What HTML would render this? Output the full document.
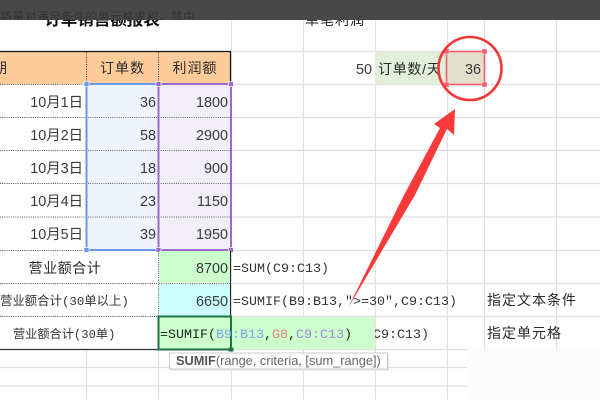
<!DOCTYPE html>
<html><head><meta charset="utf-8"><style>
html,body{margin:0;padding:0;background:#fff;width:600px;height:400px;overflow:hidden}
svg{display:block;filter:blur(.3px)}
text{font-family:"Liberation Mono","WenQuanYi Zen Hei","Noto Sans CJK SC",monospace;font-size:13.33px;fill:#333}
.n{font-family:"Liberation Sans","WenQuanYi Zen Hei","Noto Sans CJK SC",sans-serif;font-size:14.4px;fill:#3a3a3a;text-anchor:end}
.c{font-family:"Liberation Sans","Noto Sans CJK SC",sans-serif;font-size:14px;fill:#2a2a2a}
.m{text-anchor:middle}
</style></head><body>
<svg width="600" height="400" viewBox="0 0 600 400" xmlns="http://www.w3.org/2000/svg">
<defs><clipPath id="top"><rect x="0" y="0" width="600" height="20"/></clipPath></defs>
<rect width="600" height="400" fill="#fff"/>
<g stroke="#e0e0e0" stroke-width="1.2" fill="none">
<path d="M231 51.500H600M231 84.500H600M231 117.500H600M231 150.500H600M231 183.500H600M231 217H600M231 250.500H600M231 283.500H600M231 316.500H600M0 349.500H600M0 367.500H600M0 386H600"/>
<path d="M231.500 20V400M303.500 20V400M375.500 20V400M447.500 20V400M484.500 20V400M556.500 20V400M86.500 349V400M158.500 349V400"/>
</g>
<rect x="467" y="349" width="133" height="51" fill="#fcfcfc"/>
<!-- header -->
<rect x="0" y="52" width="231" height="32" fill="#ffcc99"/>
<path d="M0 51.500H231M230.500 51V84" stroke="#111" stroke-width="1.2" fill="none"/>
<path d="M86.500 52V84M158.500 52V84" stroke="#333" stroke-dasharray="1 1.400" fill="none"/>
<path d="M0 84.500H86M0 117.500H230M0 150.500H230M0 183.500H230M0 217H230M0 250.500H158M0 283.500H158M0 316.500H158" stroke="#555" stroke-dasharray="1 1.200" fill="none"/>
<!-- ranges -->
<rect x="87" y="85" width="71" height="165" fill="#eff3fd"/>
<rect x="159" y="85" width="71" height="165" fill="#f1eef9"/>
<path d="M88 117.500H230M88 150.500H230M88 183.500H230M88 217H230" stroke="#666" stroke-dasharray="1 1.200" fill="none"/>
<rect x="86.500" y="84" width="72" height="166" fill="none" stroke="#6a96ef" stroke-width="2"/>
<rect x="158.500" y="84" width="72.500" height="166" fill="none" stroke="#9b6bcb" stroke-width="2"/>
<rect x="84" y="81.500" width="5" height="5" fill="#6a96ef" stroke="#fff" stroke-width=".7"/>
<rect x="84" y="247.500" width="5" height="5" fill="#6a96ef" stroke="#fff" stroke-width=".7"/>
<rect x="156" y="81.500" width="5" height="5" fill="#9b6bcb" stroke="#fff" stroke-width=".7"/>
<rect x="228.500" y="81.500" width="5" height="5" fill="#9b6bcb" stroke="#fff" stroke-width=".7"/>
<rect x="156" y="247.500" width="5" height="5" fill="#9b6bcb" stroke="#fff" stroke-width=".7"/>
<rect x="228.500" y="247.500" width="5" height="5" fill="#9b6bcb" stroke="#fff" stroke-width=".7"/>
<!-- totals -->
<rect x="159" y="251" width="72" height="32" fill="#ccffcc"/>
<rect x="159" y="284" width="72" height="32" fill="#ccffff"/>
<path d="M230.500 251V316" stroke="#222"/>
<path d="M158.500 251V316M159 283.500H230" stroke="#666" stroke-dasharray="1 1.200" fill="none"/>
<path d="M0 349.500H160" stroke="#333" stroke-width="1.200"/>
<text x="373" y="338">C9:C13)</text>
<rect x="159" y="317" width="216" height="32" fill="#ccffcc"/>
<rect x="158.500" y="316.500" width="72.500" height="33" fill="none" stroke="#217346" stroke-width="2"/>
<rect x="228.500" y="347.500" width="5" height="4" fill="#217346"/>
<!-- labels -->
<text class="c m" x="102" y="25" style="font-size:16.5px;font-weight:bold;fill:#111">订单销售额报表</text>
<text class="c" x="305" y="25" style="fill:#222;letter-spacing:1px">单笔利润</text>
<text class="c" x="-22" y="73" style="letter-spacing:1px">日期</text>
<text class="c m" x="122.500" y="73" style="letter-spacing:1px">订单数</text>
<text class="c m" x="195" y="73" style="letter-spacing:1px">利润额</text>
<text class="n" x="83" y="107">10月1日</text>
<text class="n" x="83" y="140">10月2日</text>
<text class="n" x="83" y="173">10月3日</text>
<text class="n" x="83" y="206">10月4日</text>
<text class="n" x="83" y="239">10月5日</text>
<text class="n" x="156" y="107">36</text>
<text class="n" x="156" y="140">58</text>
<text class="n" x="156" y="173">18</text>
<text class="n" x="156" y="206">23</text>
<text class="n" x="156" y="239">39</text>
<text class="n" x="228" y="107">1800</text>
<text class="n" x="228" y="140">2900</text>
<text class="n" x="228" y="173">900</text>
<text class="n" x="228" y="206">1150</text>
<text class="n" x="228" y="239">1950</text>
<text class="n" x="228" y="273">8700</text>
<text class="n" x="228" y="306">6650</text>
<text class="c m" x="65" y="273" style="letter-spacing:.6px">营业额合计</text>
<text x="0" y="305" style="font-size:12.4px">营业额合计(30单以上)</text>
<text x="13" y="338" style="font-size:12.2px">营业额合计(30单)</text>
<text x="233" y="272">=SUM(C9:C13)</text>
<text x="233" y="305">=SUMIF(B9:B13,"&gt;=30",C9:C13)</text>
<text x="160" y="338" style="fill:#222">=SUMIF(<tspan style="fill:#7aa5ee">B9:B13</tspan>,<tspan style="fill:#e8837c">G8</tspan>,<tspan style="fill:#a58ad6">C9:C13</tspan>)</text>
<text class="c" x="487" y="305" style="letter-spacing:1px">指定文本条件</text>
<text class="c" x="487" y="338" style="letter-spacing:1px">指定单元格</text>
<!-- right cells -->
<text class="n" x="372" y="74">50</text>
<rect x="375" y="52" width="71" height="32" fill="#e2efda"/>
<text class="c" x="378" y="74" style="letter-spacing:.7px">订单数/天</text>
<rect x="447" y="52" width="37" height="32" fill="#e0dfcb"/>
<text class="n" x="481" y="74">36</text>
<rect x="446.500" y="51.500" width="38" height="33" fill="none" stroke="#f0606a" stroke-width="1.600"/>
<g fill="#f0606a" stroke="#fff" stroke-width=".4">
<rect x="444" y="49" width="5" height="5"/><rect x="482" y="49" width="5" height="5"/>
<rect x="444" y="82" width="5" height="5"/><rect x="482" y="82" width="5" height="5"/>
</g>
<!-- tooltip -->
<rect x="169.500" y="353" width="218" height="16" fill="#fff" stroke="#ccc"/>
<path d="M170 370H388.500V354" stroke="#e4e4e4" fill="none"/>
<text x="176" y="365" style='font-family:"Liberation Sans",sans-serif;font-size:12.8px;fill:#666'><tspan style="font-weight:bold;fill:#555">SUMIF</tspan>(range, criteria, [sum_range])</text>
<!-- annotation -->
<circle cx="470" cy="68.500" r="31.500" fill="none" stroke="#f63636" stroke-width="2.600"/>
<polygon points="455,109 454,135 447,129 415,195 348,308 403,197 440,128 434,124" fill="#f93a3a"/>
<!-- top bar -->
<rect x="0" y="0" width="600" height="20" fill="#484848"/>
<g clip-path="url(#top)"><text x="0" y="21" style="font-size:12.2px;fill:#333">将量对满足条件的单元格求和，其中</text></g>
</svg>
</body></html>
